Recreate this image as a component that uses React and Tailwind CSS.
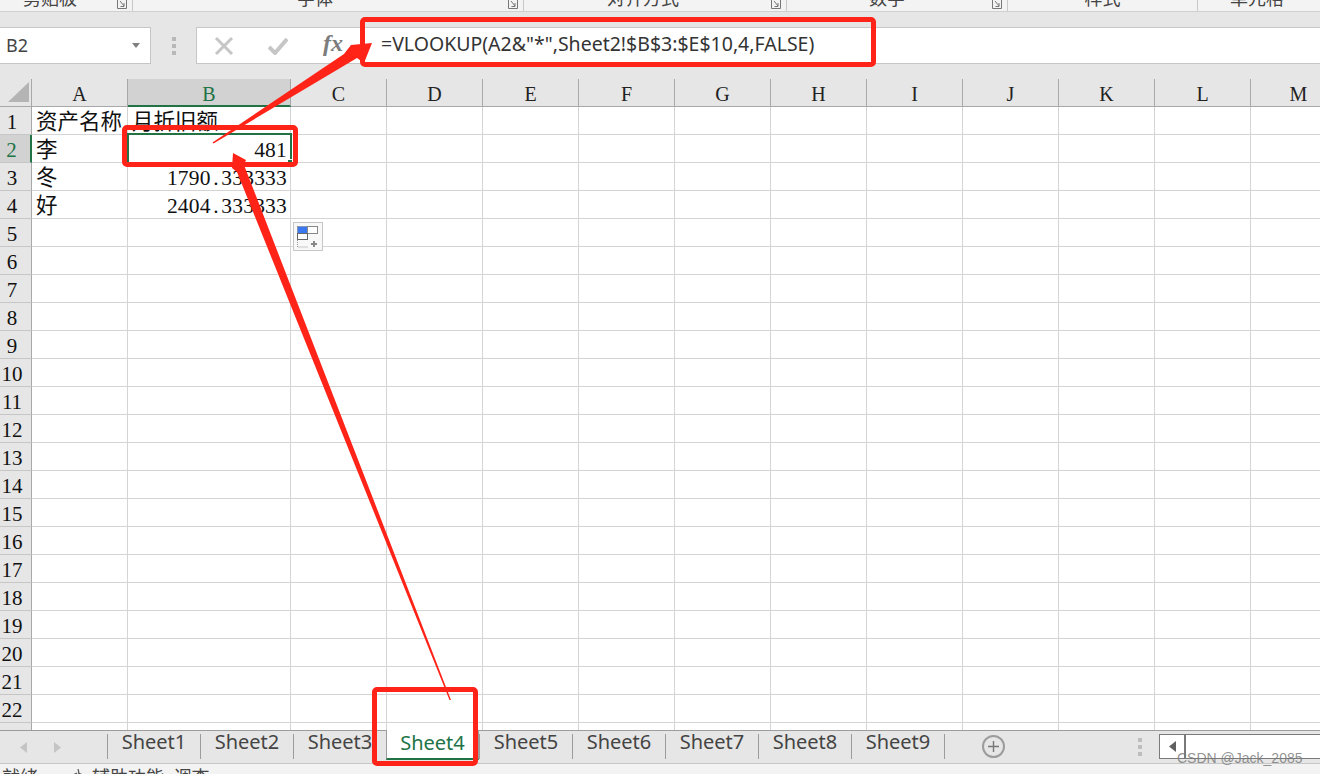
const SERIF = "font-['Liberation_Serif','Noto_Sans_CJK_SC',serif]";
const SANS = "font-['Noto_Sans','Noto_Sans_CJK_SC',sans-serif]";
const columns = ["A","B","C","D","E","F","G","H","I","J","K","L","M"];
const data = {
  1: ["资产名称", "月折旧额"],
  2: ["李", "481"],
  3: ["冬", "1790.333333"],
  4: ["好", "2404.333333"],
};
const ribbon = [
  { label: "剪贴板", w: "w-[133px]", pr: "pr-[32px]", launcher: true },
  { label: "字体", w: "w-[391px]", pr: "pr-[26px]", launcher: true },
  { label: "对齐方式", w: "w-[263px]", pr: "pr-[24px]", launcher: true },
  { label: "数字", w: "w-[221px]", pr: "pr-[20px]", launcher: true },
  { label: "样式", w: "w-[190px]", pr: "pr-0", launcher: false },
  { label: "单元格", w: "w-[122px]", pr: "pr-[4px]", launcher: false },
];
const sheets = ["Sheet1","Sheet2","Sheet3","Sheet4","Sheet5","Sheet6","Sheet7","Sheet8","Sheet9"];

function Launcher() {
  return (
    <svg width="10" height="10" viewBox="0 0 10 10" className="absolute right-[5px] top-0 text-[#777]">
      <path d="M0.5 0v8.5H9.5V0" fill="none" stroke="currentColor" />
      <path d="M3 1l4 5M7 3v3.5H3.5" fill="none" stroke="currentColor" />
    </svg>
  );
}

function Ribbon() {
  return (
    <div className="flex h-3 shrink-0 overflow-hidden border-b border-[#d0d0d0] bg-[#f3f3f3]">
      {ribbon.map((r, i) => (
        <div key={r.label} className={`relative h-full shrink-0 ${r.w} ${i < 5 ? "border-r border-[#c8c8c8]" : ""}`}>
          <div className={`-mt-[11px] ${r.pr} text-center text-[18px] leading-[18px] text-[#444] ${SANS}`}>{r.label}</div>
          {r.launcher && <Launcher />}
        </div>
      ))}
    </div>
  );
}

function FormulaBar() {
  return (
    <div className="flex h-[67px] shrink-0 items-start bg-[#e6e6e6] pt-[15px]">
      <div className={`flex h-[37px] w-[151px] shrink-0 items-center justify-between border border-l-0 border-[#c6c6c6] bg-white pl-[6px] pr-[10px] text-[18px] text-[#444] ${SANS}`}>
        <span>B2</span>
        <svg width="8" height="5" viewBox="0 0 8 5"><path d="M0 0h8L4 5z" fill="#808080" /></svg>
      </div>
      <div className="flex h-[37px] w-[45px] shrink-0 flex-col items-center justify-center gap-[3px]">
        <span className="size-[4px] bg-[#b8b8b8]" />
        <span className="size-[4px] bg-[#b8b8b8]" />
        <span className="size-[4px] bg-[#b8b8b8]" />
      </div>
      <div className="flex h-[37px] flex-1 items-center border border-r-0 border-[#c6c6c6] bg-white">
        <div className="flex w-[184px] shrink-0 items-center">
          <svg width="20" height="20" viewBox="0 0 20 20" className="ml-[17px]">
            <path d="M2 2l16 16M18 2L2 18" stroke="#c6c6c6" strokeWidth="3" fill="none" />
          </svg>
          <svg width="20" height="18" viewBox="0 0 20 18" className="ml-[34px]">
            <path d="M1 10l6 6L19 2" stroke="#c6c6c6" strokeWidth="4" fill="none" />
          </svg>
          <span className={`ml-[35px] pb-[5px] text-[24px] leading-none font-bold italic text-[#7c7c7c] ${SERIF}`}>fx</span>
        </div>
        <span className={`whitespace-nowrap pb-[3px] text-[19.5px] text-[#333] ${SANS}`}>=VLOOKUP(A2&amp;"*",Sheet2!$B$3:$E$10,4,FALSE)</span>
      </div>
    </div>
  );
}

const gridCols = "grid grid-cols-[32px_96px_163px_repeat(11,96px)]";

function HeaderRow() {
  return (
    <div className={`${gridCols} h-7 shrink-0 bg-[#e6e6e6] ${SERIF}`}>
      <div className="flex items-end justify-end border-r border-b border-[#a8a8a8] pb-[4px] pr-[2px]">
        <svg width="21" height="20" viewBox="0 0 21 20"><path d="M21 0v20H0z" fill="#b4b4b4" /></svg>
      </div>
      {columns.map((c) => (
        <div
          key={c}
          className={`flex items-center justify-center pt-[3px] text-[20px] leading-none ${
            c === "B"
              ? "border-b-2 border-b-[#217346] border-r border-r-[#a8a8a8] bg-[#d2d2d2] text-[#217346]"
              : "border-r border-b border-[#a8a8a8] text-[#222]"
          }`}
        >
          {c}
        </div>
      ))}
    </div>
  );
}

function CellValue({ value }) {
  if (!value || !value.includes(".")) return value;
  const [whole, frac] = value.split(".");
  return (
    <>
      {whole}
      <span className="px-[2.5px]">.</span>
      {frac}
    </>
  );
}

function Rows() {
  const rows = Array.from({ length: 23 }, (_, i) => i + 1);
  return (
    <div className={`h-[623px] shrink-0 overflow-hidden bg-white ${SERIF}`}>
      {rows.map((r) => {
        const d = data[r] || [];
        return (
          <div key={r} className={`${gridCols} h-7`}>
            <div
              className={`flex items-center justify-center border-b border-[#c6c6c6] pr-[7px] pt-[3px] text-[21px] leading-none ${
                r === 2
                  ? "border-r-2 border-r-[#217346] bg-[#d2d2d2] text-[#217346]"
                  : "border-r border-r-[#a8a8a8] bg-[#e6e6e6] text-[#111]"
              }`}
            >
              {r}
            </div>
            {columns.map((c, ci) => {
              const val = d[ci];
              const numeric = val && /^[\d.]+$/.test(val);
              return (
                <div
                  key={c}
                  className={`whitespace-nowrap border-r border-b border-[#d4d4d4] pt-[3px] text-[21.5px] leading-[24px] text-[#111] ${
                    numeric ? "pr-[3px] text-right tracking-[0.2px]" : "pl-[4px]"
                  }`}
                >
                  <CellValue value={val} />
                </div>
              );
            })}
          </div>
        );
      })}
    </div>
  );
}

function TabBar() {
  return (
    <div className="flex h-[34px] shrink-0 items-stretch border-t border-b border-t-[#9c9c9c] border-b-[#c6c6c6] bg-[#e6e6e6]">
      <div className="flex w-[107px] shrink-0 items-center gap-[27px] pl-[20px] pt-[1px]">
        <svg width="7" height="11" viewBox="0 0 7 11"><path d="M7 0v11L0 5.5z" fill="#c4c4c4" /></svg>
        <svg width="7" height="11" viewBox="0 0 7 11"><path d="M0 0v11l7-5.5z" fill="#c4c4c4" /></svg>
      </div>
      {sheets.map((s) => {
        const active = s === "Sheet4";
        return active ? (
          <div key={s} className={`-mb-px -mt-px flex h-[30px] w-[93px] shrink-0 items-center justify-center border-x border-x-[#9c9c9c] border-b-2 border-b-[#217346] bg-white pb-[3px] text-[20px] text-[#217346] ${SANS}`}>
            {s}
          </div>
        ) : (
          <div key={s} className="flex w-[93px] shrink-0 items-start pt-[3px]">
            <div className={`flex h-[25px] w-full items-center justify-center border-l border-[#9c9c9c] pb-[9px] text-[20px] text-[#444] ${SANS}`}>{s}</div>
          </div>
        );
      })}
      <div className="flex w-[96px] shrink-0 items-start pt-[3px]">
        <div className="h-[25px] border-l border-[#9c9c9c]" />
        <div className="ml-[37px] mt-[1px] flex size-[23px] items-center justify-center rounded-full border-2 border-[#9c9c9c]">
          <svg width="11" height="11" viewBox="0 0 11 11"><path d="M5.5 0v11M0 5.5h11" stroke="#777" strokeWidth="1.4" /></svg>
        </div>
      </div>
      <div className="flex w-[119px] shrink-0 flex-col items-end justify-center gap-[3px] pr-[17px]">
        <span className="size-[4px] bg-[#bdbdbd]" />
        <span className="size-[4px] bg-[#bdbdbd]" />
        <span className="size-[4px] bg-[#bdbdbd]" />
      </div>
      <div className="mt-[3px] flex h-[25px] flex-1 items-stretch self-start">
        <div className="flex w-[25px] shrink-0 items-center justify-center border border-r-0 border-[#7a7a7a] bg-white">
          <svg width="7" height="11" viewBox="0 0 7 11"><path d="M7 0v11L0 5.5z" fill="#606060" /></svg>
        </div>
        <div className="flex-1 border border-r-0 border-l-2 border-[#7a7a7a] bg-white" />
      </div>
    </div>
  );
}

function StatusBar() {
  return (
    <div className={`flex h-[10px] shrink-0 overflow-hidden bg-[#f3f3f3] pl-[2px] text-[18px] leading-[18px] text-[#444] ${SANS}`}>
      <span className="mt-[4px]">就绪</span>
      <svg width="12" height="12" viewBox="0 0 12 12" className="ml-[34px] mt-[5px] shrink-0">
        <path d="M6 0l1 4M1 6l4-2M6 4l5 2" fill="none" stroke="#555" strokeWidth="1.2" />
      </svg>
      <span className="ml-[8px] mt-[4px]">辅助功能: 调查</span>
    </div>
  );
}

function PasteOptions() {
  return (
    <div className="absolute left-[293px] top-[222px] flex h-[29px] w-[30px] items-center justify-center border border-[#c6c6c6] bg-[#f8f8f8]">
      <svg width="22" height="22" viewBox="0 0 22 22">
        <rect x="0.5" y="0.5" width="10" height="7" fill="#3b78f0" stroke="#777" strokeWidth="0.5" />
        <rect x="10.5" y="0.5" width="10" height="7" fill="#fff" stroke="#888" />
        <rect x="0.5" y="7.5" width="10" height="6" fill="#fff" stroke="#666" />
        <path d="M0.5 14v7h10" fill="none" stroke="#999" strokeDasharray="1 1" />
        <path d="M17 15v6M14 18h6" stroke="#888" strokeWidth="2" />
      </svg>
    </div>
  );
}

function Annotations() {
  return (
    <>
      <svg width="1320" height="774" viewBox="0 0 1320 774" className="pointer-events-none absolute left-0 top-0">
        <polygon points="212.5,142.5 344,54 351,45 372,43 364,63 357,58 213.5,143.5" fill="#ff2318" />
        <polygon points="233,153 246,160 244,165 451,700 449.5,700 237,172 232,168" fill="#ff2318" />
      </svg>
      <div className="pointer-events-none absolute left-[360px] top-[17px] h-[50px] w-[516px] rounded-[5px] border-[5px] border-[#ff2318]" />
      <div className="pointer-events-none absolute left-[122px] top-[125px] h-[42px] w-[176px] rounded-[5px] border-[5px] border-[#ff2318]" />
      <div className="pointer-events-none absolute left-[372px] top-[687px] h-[79px] w-[106px] rounded-[5px] border-[5px] border-[#ff2318]" />
    </>
  );
}

export default function App() {
  return (
    <div className="relative flex h-[774px] w-[1320px] flex-col overflow-hidden bg-white">
      <Ribbon />
      <FormulaBar />
      <HeaderRow />
      <Rows />
      <TabBar />
      <StatusBar />
      <div className="absolute left-[127px] top-[133px] h-[31px] w-[165px] border-2 border-[#217346]" />
      <div className="absolute left-[287px] top-[159px] size-[6px] border border-white bg-[#217346]" />
      <PasteOptions />
      <Annotations />
      <span className="absolute left-[1177px] top-[749px] font-['Liberation_Sans',sans-serif] text-[14px] leading-[18px] text-[#777]/80">CSDN @Jack_2085</span>
    </div>
  );
}
